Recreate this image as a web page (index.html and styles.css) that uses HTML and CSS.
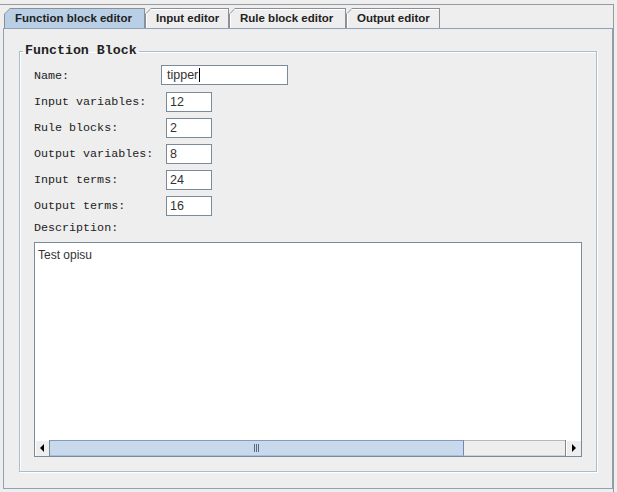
FILE: index.html
```html
<!DOCTYPE html>
<html lang="en">
<head>
    <meta charset="UTF-8">
    <title>Function block editor</title>
    <link rel="stylesheet" href="styles.css">
</head>
<body>
    <div class="window">
        <div class="tabs">
            <div class="tab tab-active tab-fb"><span>Function block editor</span></div>
            <div class="tab tab-in"><span>Input editor</span></div>
            <div class="tab tab-rule"><span>Rule block editor</span></div>
            <div class="tab tab-out"><span>Output editor</span></div>
        </div>
        <div class="panel">
            <fieldset class="group">
                <legend>Function Block</legend>
                <div class="form">
                    <label class="lbl lbl-name">Name:</label>
                    <span class="field field-wide">tipper<i class="caret"></i></span>
                    <label class="lbl">Input variables:</label>
                    <span class="field">12</span>
                    <label class="lbl">Rule blocks:</label>
                    <span class="field">2</span>
                    <label class="lbl">Output variables:</label>
                    <span class="field">8</span>
                    <label class="lbl">Input terms:</label>
                    <span class="field">24</span>
                    <label class="lbl">Output terms:</label>
                    <span class="field">16</span>
                </div>
                <div class="desc-label">Description:</div>
                <div class="desc">
                    <div class="desc-text">Test opisu</div>
                    <div class="hscroll">
                        <span class="sb-btn sb-left"><i></i></span>
                        <span class="sb-thumb"><i></i></span>
                        <span class="sb-track"></span>
                        <span class="sb-btn sb-right"><i></i></span>
                    </div>
                </div>
            </fieldset>
        </div>
    </div>
</body>
</html>
```

FILE: styles.css
```css
*{
    box-sizing: border-box;
}
body{
    margin:0;
    width:617px;
    height:492px;
    overflow:hidden;
    background:#eeeeee;
    font-family: "Liberation Sans", Arial, sans-serif;
    color:#222;
}
.window{
    margin-top:4px;
    width:614px;
    border-top:1px solid #9a9a9a;
    border-right:1px solid #9a9a9a;
    height:488px;
}
.tabs{
    display:flex;
    height:23px;
    padding:3px 0 0 4px;
}
.tab{
    height:20px;
    padding:1px 1px 0 1px;
    background:#8a9099;
    clip-path: polygon(6px 0, 100% 0, 100% 100%, 0 100%, 0 6px);
}
.tab span{
    display:block;
    height:19px;
    line-height:18px;
    padding:0 0 0 10px;
    background:#eeeeee;
    box-shadow: inset 1px 1px #fff;
    clip-path: polygon(5px 0, 100% 0, 100% 100%, 0 100%, 0 5px);
    font-size:11.5px;
    font-weight:bold;
    color:#222;
    white-space:nowrap;
}
.tab-fb{ width:141px; }
.tab-in{ width:84px; }
.tab-rule{ width:117px; }
.tab-out{ width:94px; }
.tab-active span{
    background:#b8cfe5;
    box-shadow:none;
}
.panel{
    margin-left:3px;
    width:610px;
    border:1px solid #8ea1b6;
    padding:15px 15px 16px 15px;
}
.group{
    margin:0;
    min-width:0;
    padding:0 14px 14px 14px;
    border:1px solid #a9bdd1;
    box-shadow: 1px 1px #fff, inset 1px 1px #fff;
}
.group legend{
    margin-left:-11px;
    padding:0 2px;
    font-family: "Liberation Mono", "Courier New", monospace;
    font-size:13.3px;
    font-weight:bold;
    line-height:14px;
    color:#222;
}
.form{
    display:grid;
    grid-template-columns:132px auto;
    row-gap:6px;
    align-items:center;
    justify-items:start;
    margin-top:7px;
}
.lbl, .desc-label{
    font-family: "Liberation Mono", "Courier New", monospace;
    font-size:11.7px;
    line-height:20px;
    color:#222;
}
.field{
    display:block;
    width:46px;
    height:20px;
    padding-left:3px;
    border:1px solid #7a8a99;
    background:#fff;
    font-size:12.5px;
    line-height:18px;
    color:#333;
}
.field-wide{
    width:127px;
    margin-left:-5px;
    margin-bottom:1px;
    padding-left:5px;
}
.caret{
    display:inline-block;
    width:1px;
    height:14px;
    margin-left:1px;
    vertical-align:-3px;
    background:#000;
}
.desc-label{
    margin-top:5px;
    line-height:14px;
}
.desc{
    display:flex;
    flex-direction:column;
    width:548px;
    height:215px;
    margin-top:7px;
    border:1px solid #7a8a99;
    background:#fff;
}
.desc-text{
    flex:1;
    padding:5px 3px 3px;
    font-size:12px;
    line-height:15px;
    color:#333;
}
.hscroll{
    display:flex;
    height:16px;
    background:#eeeeee;
}
.sb-btn{
    display:flex;
    align-items:center;
    justify-content:center;
    width:16px;
    background:#eeeeee;
    box-shadow: inset 1px 1px #fff;
}
.sb-left{
    width:15px;
    border-right:1px solid #7a8a99;
}
.sb-right{
    border-left:1px solid #7a8a99;
}
.sb-left i{
    border-top:4px solid transparent;
    border-bottom:4px solid transparent;
    border-right:4px solid #000;
}
.sb-right i{
    border-top:4px solid transparent;
    border-bottom:4px solid transparent;
    border-left:4px solid #000;
}
.sb-thumb{
    display:flex;
    align-items:center;
    justify-content:center;
    width:414px;
    background:#c9d9ec;
    border-top:1px solid #7f9bc4;
    border-bottom:1px solid #a9bedb;
    border-right:1px solid #6f8bb4;
}
.sb-thumb i{
    width:5px;
    height:8px;
    background: repeating-linear-gradient(90deg, #56688a 0 1px, transparent 1px 2px);
}
.sb-track{
    flex:1;
    background:#eeeeee;
    border-top:1px solid #b8b8b8;
    border-bottom:1px solid #d0d0d0;
}
```
